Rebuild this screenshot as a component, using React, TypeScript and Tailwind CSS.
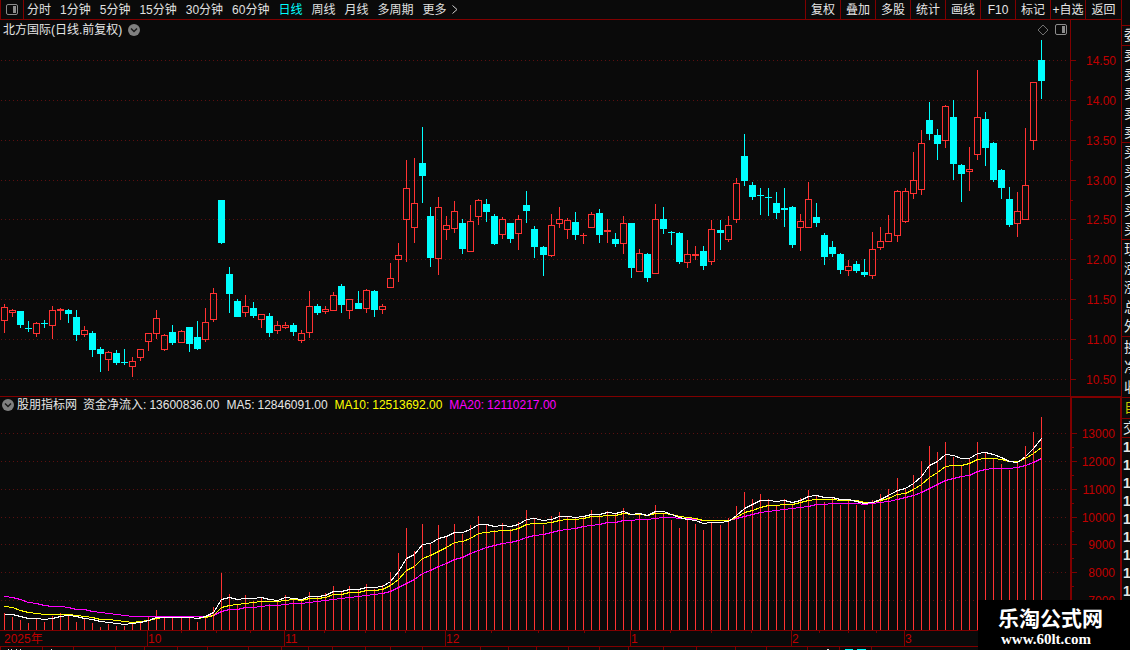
import React from 'react';

type Kind = 'up' | 'down';
type Candle = [Kind, number, number, number, number];

const PERIODS = ['分时', '1分钟', '5分钟', '15分钟', '30分钟', '60分钟', '日线', '周线', '月线', '多周期', '更多'];
const ACTIONS = ['复权', '叠加', '多股', '统计', '画线', 'F10', '标记', '+自选'];

// kind, high, body top, body bottom, low
const CANDLES: Candle[] = [
  ['up', 304, 307, 321, 333], ['up', 309, 310, 313, 317], ['down', 311, 311, 325, 328], ['down', 321, 328, 329, 332],
  ['up', 322, 323, 334, 337], ['down', 320, 323, 324, 328], ['up', 306, 310, 326, 339], ['up', 308, 309, 311, 320],
  ['down', 309, 310, 314, 323], ['down', 310, 317, 335, 341], ['up', 326, 330, 335, 337], ['down', 331, 333, 350, 357],
  ['down', 347, 349, 354, 372], ['up', 351, 352, 360, 371], ['down', 350, 353, 363, 365], ['down', 349, 362, 363, 365],
  ['up', 357, 361, 367, 377], ['up', 349, 349, 358, 361], ['up', 333, 333, 342, 351], ['up', 310, 318, 334, 339],
  ['up', 334, 335, 350, 351], ['down', 325, 332, 343, 345], ['up', 330, 331, 343, 343], ['down', 327, 327, 344, 352],
  ['down', 321, 337, 349, 350], ['up', 308, 322, 340, 342], ['up', 288, 293, 320, 322], ['down', 200, 200, 243, 244],
  ['down', 267, 274, 294, 313], ['down', 299, 301, 317, 317], ['up', 295, 306, 313, 317], ['down', 302, 308, 316, 318],
  ['up', 314, 314, 320, 328], ['down', 313, 316, 333, 337], ['up', 321, 325, 331, 334], ['up', 322, 325, 328, 329],
  ['down', 323, 325, 332, 336], ['up', 330, 333, 341, 343], ['up', 291, 306, 333, 338], ['down', 304, 306, 313, 315],
  ['up', 306, 309, 312, 314], ['up', 292, 295, 311, 311], ['down', 284, 286, 305, 313], ['up', 299, 299, 311, 319],
  ['down', 291, 303, 309, 309], ['up', 289, 290, 309, 313], ['down', 290, 291, 310, 317], ['up', 304, 306, 310, 314],
  ['up', 263, 278, 288, 288], ['up', 243, 255, 260, 282], ['up', 160, 188, 220, 262], ['up', 158, 203, 228, 243],
  ['down', 127, 163, 176, 203], ['down', 207, 216, 258, 267], ['up', 197, 207, 259, 275], ['up', 216, 225, 230, 240],
  ['up', 201, 211, 229, 233], ['down', 219, 223, 249, 254], ['up', 205, 221, 252, 252], ['up', 199, 200, 217, 225],
  ['down', 199, 204, 212, 222], ['down', 214, 216, 244, 245], ['up', 217, 219, 235, 239], ['down', 223, 223, 239, 243],
  ['up', 215, 219, 234, 250], ['down', 191, 205, 211, 223], ['down', 226, 229, 247, 258], ['down', 246, 247, 255, 276],
  ['up', 214, 225, 256, 257], ['up', 207, 219, 224, 228], ['up', 218, 220, 230, 239], ['down', 212, 222, 235, 240],
  ['up', 233, 235, 236, 244], ['up', 212, 214, 228, 228], ['down', 209, 213, 235, 243], ['up', 219, 230, 232, 243],
  ['down', 233, 239, 244, 247], ['up', 216, 223, 244, 254], ['down', 223, 223, 268, 278], ['up', 249, 253, 272, 272],
  ['down', 253, 254, 278, 282], ['up', 204, 219, 274, 274], ['down', 207, 219, 229, 234], ['down', 231, 232, 233, 245],
  ['down', 232, 233, 262, 264], ['up', 240, 254, 263, 268], ['up', 246, 254, 256, 260], ['down', 246, 251, 266, 270],
  ['up', 220, 229, 262, 265], ['down', 220, 230, 233, 250], ['up', 216, 225, 240, 242], ['up', 178, 183, 220, 223],
  ['down', 134, 156, 181, 186], ['down', 182, 185, 197, 200], ['down', 188, 195, 196, 215], ['down', 188, 197, 198, 216],
  ['down', 192, 203, 213, 219], ['down', 188, 208, 210, 227], ['down', 206, 207, 245, 248], ['up', 214, 221, 228, 251],
  ['up', 182, 199, 228, 228], ['down', 203, 217, 223, 227], ['down', 233, 235, 257, 265], ['down', 241, 247, 254, 257],
  ['down', 253, 254, 270, 274], ['up', 260, 266, 271, 276], ['down', 261, 264, 271, 273], ['down', 259, 272, 275, 277],
  ['up', 232, 249, 276, 279], ['up', 227, 241, 248, 250], ['up', 215, 233, 242, 242], ['up', 190, 191, 236, 242],
  ['up', 188, 191, 222, 223], ['up', 152, 180, 194, 199], ['up', 130, 143, 190, 195], ['down', 102, 120, 134, 140],
  ['down', 129, 135, 144, 160], ['up', 105, 106, 141, 148], ['down', 100, 117, 164, 180], ['down', 164, 165, 174, 202],
  ['up', 147, 169, 172, 191], ['up', 70, 117, 155, 160], ['down', 112, 119, 148, 166], ['down', 142, 143, 180, 182],
  ['down', 169, 170, 188, 199], ['down', 187, 199, 225, 227], ['up', 192, 211, 224, 237], ['up', 128, 185, 220, 220],
  ['up', 82, 82, 141, 150], ['down', 40, 60, 81, 99],
];

const FLOW = [
  613, 617, 620, 623, 619, 622, 616, 613, 615, 622, 619, 623, 627, 624, 626, 626, 624, 622, 617, 610,
  616, 618, 616, 617, 622, 617, 607, 573, 594, 605, 595, 601, 597, 604, 600, 595, 599, 601, 592, 596,
  593, 586, 592, 586, 590, 584, 589, 585, 572, 553, 528, 551, 524, 543, 525, 536, 524, 534, 525, 516,
  525, 530, 523, 529, 522, 510, 518, 525, 516, 512, 516, 518, 517, 510, 515, 511, 513, 508, 520, 514,
  519, 505, 513, 520, 528, 519, 524, 530, 522, 525, 518, 506, 492, 499, 494, 499, 505, 499, 505, 498,
  490, 496, 502, 498, 505, 500, 505, 510, 500, 494, 489, 478, 488, 475, 461, 446, 452, 442, 457, 465,
  459, 442, 453, 459, 464, 470, 462, 446, 432, 417,
];

const MA5 = [
  614, 614, 616, 618, 618, 619, 618, 616, 615, 616, 618, 619, 621, 622, 623, 624, 623, 622, 620, 617,
  617, 617, 617, 617, 618, 616, 612, 599, 597, 599, 598, 598, 597, 599, 600, 597, 598, 599, 596, 596,
  595, 591, 591, 589, 589, 587, 587, 586, 581, 571, 558, 554, 544, 543, 538, 536, 532, 532, 529, 524,
  524, 526, 525, 526, 524, 519, 518, 520, 519, 516, 516, 517, 516, 514, 514, 512, 513, 511, 514, 513,
  515, 511, 511, 514, 517, 519, 520, 523, 522, 522, 521, 515, 508, 504, 500, 500, 501, 500, 502, 500,
  496, 495, 497, 497, 499, 499, 501, 503, 502, 499, 495, 490, 488, 483, 476, 465, 461, 454, 455, 458,
  458, 453, 452, 454, 457, 461, 462, 456, 448, 438,
];

const MA10 = [
  606, 607, 610, 612, 613, 614, 614, 614, 614, 615, 616, 617, 619, 619, 620, 621, 622, 621, 620, 618,
  617, 617, 617, 617, 618, 617, 615, 607, 605, 604, 603, 602, 601, 601, 601, 600, 599, 600, 598, 598,
  597, 594, 594, 592, 592, 590, 590, 589, 585, 579, 570, 566, 558, 555, 551, 547, 542, 541, 538, 533,
  532, 531, 530, 530, 528, 524, 523, 523, 522, 520, 519, 519, 518, 516, 516, 515, 515, 513, 514, 514,
  515, 513, 513, 514, 516, 517, 518, 520, 520, 520, 520, 517, 512, 510, 507, 505, 505, 504, 504, 502,
  500, 499, 499, 499, 500, 500, 500, 502, 502, 500, 498, 494, 493, 489, 484, 477, 472, 466, 465, 465,
  463, 459, 458, 458, 459, 461, 461, 458, 453, 447,
];

const MA20 = [
  596, 597, 599, 602, 603, 605, 606, 606, 607, 609, 609, 611, 612, 613, 614, 615, 616, 616, 616, 616,
  616, 616, 616, 616, 616, 616, 615, 611, 609, 609, 607, 607, 606, 605, 605, 604, 603, 603, 602, 601,
  600, 599, 598, 597, 596, 595, 594, 593, 591, 587, 583, 579, 573, 570, 566, 563, 559, 557, 553, 550,
  547, 545, 543, 542, 540, 537, 535, 534, 532, 530, 529, 528, 526, 525, 524, 522, 522, 520, 520, 519,
  519, 518, 517, 517, 518, 518, 519, 520, 520, 520, 520, 518, 516, 514, 512, 511, 510, 509, 508, 507,
  506, 504, 504, 503, 503, 503, 503, 504, 503, 502, 501, 499, 497, 495, 492, 488, 484, 480, 478, 476,
  475, 471, 469, 468, 468, 468, 467, 465, 462, 458,
];

const PRICE_LEVELS: [number, string][] = [
  [60, '14.50'], [100, '14.00'], [140, '13.50'], [180, '13.00'], [219, '12.50'],
  [259, '12.00'], [299, '11.50'], [339, '11.00'], [379, '10.50'],
];

const FLOW_LEVELS: [number, string][] = [
  [433, '13000'], [461, '12000'], [489, '11000'], [517, '10000'], [544, '9000'], [572, '8000'], [600, '7000'],
];

const MONTHS: [number, string][] = [
  [147, '10'], [284, '11'], [445, '12'], [630, '1'], [791, '2'], [904, '3'],
];
const WEEK_TICKS = [181, 216, 250, 324, 365, 405, 491, 538, 584, 670, 711, 751, 819, 848, 876];
const TAB_TICKS = [
  0, 42, 73, 115, 144, 177, 207, 248, 281, 308, 332, 365, 390, 422, 480, 508, 536, 568, 599, 628, 663, 696, 735, 766,
  807, 839, 871,
];

const QUOTE_GROUPS = [
  ['卖', '卖', '卖', '卖', '卖'],
  ['买', '买', '买', '买', '买'],
  ['现', '涨', '涨', '总', '外'],
];

// bars sit 8px apart, with one spare pixel about every 22 bars
const barX = (i: number) => 4 + i * 8 + Math.floor((i + 0.6) / 22.25);

const linePoints = (values: number[]) => values.map((y, i) => `${barX(i) + 0.5},${y + 0.5}`).join(' ');

const ChevronBadge: React.FC<{ label: string }> = ({ label }) => (
  <button aria-label={label} className="shrink-0">
    <svg width="12" height="12" viewBox="0 0 12 12">
      <circle cx="6" cy="6" r="6" fill="#808080" />
      <path d="M3 4.5 L6 7.5 L9 4.5" fill="none" stroke="#1a1a1a" strokeWidth="1.5" />
    </svg>
  </button>
);

const PanelIcon: React.FC = () => (
  <svg width="13" height="12" viewBox="0 0 13 12">
    <rect x="0.5" y="0.5" width="11" height="10" rx="1.5" fill="none" stroke="#8c8c8c" />
    <rect x="7" y="2" width="3" height="7" fill="#8c8c8c" />
  </svg>
);

const GridLines: React.FC<{ levels: [number, string][] }> = ({ levels }) => (
  <>
    {levels.map(([y]) => (
      <line key={y} x1="1" x2="99.6%" y1={y + 0.5} y2={y + 0.5} stroke="#5c1010" strokeDasharray="1 3" />
    ))}
  </>
);

const Scale: React.FC<{ levels: [number, string][]; top: number; half: number; right: number }> = ({
  levels,
  top,
  half,
  right,
}) => (
  <svg className="block w-full h-full text-[12px]">
    <g transform={`translate(0 ${-top})`}>
      {levels.map(([y, label]) => (
        <g key={label}>
          <rect x="0" y={y} width="5" height="1" fill="#800000" />
          <rect x="0" y={y + half} width="2" height="1" fill="#800000" />
          <text x={right} y={y + 5} textAnchor="end" fill="#c00000">
            {label}
          </text>
        </g>
      ))}
    </g>
  </svg>
);

const Candles: React.FC = () => (
  <>
    {CANDLES.map(([kind, high, top, bottom, low], i) => {
      const x = barX(i);
      if (kind === 'down') {
        return (
          <g key={i} fill="#00ffff">
            <rect x={x} y={high} width="1" height={low - high} />
            <rect x={x - 3} y={top} width="7" height={bottom - top} />
          </g>
        );
      }
      return (
        <g key={i} fill="#ff3232">
          <rect x={x} y={high} width="1" height={top - high} />
          <rect x={x} y={bottom} width="1" height={low - bottom} />
          {bottom - top < 3 ? (
            <rect x={x - 3} y={top} width="7" height={bottom - top} />
          ) : (
            <rect x={x - 2.5} y={top + 0.5} width="6" height={bottom - top - 1} fill="none" stroke="#ff3232" />
          )}
        </g>
      );
    })}
  </>
);

const Toolbar: React.FC = () => (
  <header className="flex h-5 border-b border-[#800000]">
    <button aria-label="侧栏" className="flex w-6 items-center justify-center border-x border-[#800000]">
      <PanelIcon />
    </button>
    <nav className="flex flex-1 items-center gap-[9px] pl-[3px]">
      {PERIODS.map((period) => (
        <button key={period} className={period === '日线' ? 'text-[#00ffff]' : 'text-[#e0e0e0]'}>
          {period}
        </button>
      ))}
      <svg width="6" height="9" viewBox="0 0 6 9" className="-ml-1">
        <path d="M0.5 0.5 L5 4.5 L0.5 8.5" fill="none" stroke="#d0d0d0" />
      </svg>
    </nav>
    <div className="flex">
      {ACTIONS.map((action) => (
        <button key={action} className="w-[35px] border-l border-[#800000] whitespace-nowrap">
          {action}
        </button>
      ))}
      <button className="w-[36px] border-l border-[#800000]">返回</button>
    </div>
  </header>
);

const PricePanel: React.FC = () => (
  <section className="flex h-[376px]">
    <div className="flex min-w-0 flex-1 flex-col">
      <div className="flex h-5 items-center gap-[6px] pl-[3px] pr-[2px]">
        <h1>北方国际(日线.前复权)</h1>
        <ChevronBadge label="展开" />
        <svg width="12" height="12" viewBox="0 0 12 12" className="ml-auto">
          <path d="M6 1 L11 6 L6 11 L1 6 Z" fill="none" stroke="#707070" />
        </svg>
        <PanelIcon />
      </div>
      <svg className="block w-full flex-1" shapeRendering="crispEdges">
        <g transform="translate(0 -40)">
          <GridLines levels={PRICE_LEVELS} />
          <Candles />
        </g>
      </svg>
    </div>
    <div className="w-[51px] border-l border-[#800000]">
      <Scale levels={PRICE_LEVELS} top={20} half={20} right={45} />
    </div>
  </section>
);

const Reading: React.FC<{ name: string; value: string }> = ({ name, value }) => (
  <span className="flex gap-[3px]">
    <span>{name}:</span>
    <span>{value}</span>
  </span>
);

const FlowPanel: React.FC = () => (
  <section className="flex h-[234px] border-t border-[#800000]">
    <div className="flex min-w-0 flex-1 flex-col">
      <div className="flex h-4 items-center gap-[3px] whitespace-nowrap pl-[2px]">
        <ChevronBadge label="指标" />
        <h2 className="pr-[3px]">股朋指标网</h2>
        <div className="flex gap-[7px]">
          <Reading name="资金净流入" value="13600836.00" />
          <Reading name="MA5" value="12846091.00" />
          <div className="text-[#ffff00]">
            <Reading name="MA10" value="12513692.00" />
          </div>
          <div className="text-[#ff00ff]">
            <Reading name="MA20" value="12110217.00" />
          </div>
        </div>
      </div>
      <svg className="block w-full flex-1" shapeRendering="crispEdges">
        <g transform="translate(0 -413)">
          <GridLines levels={FLOW_LEVELS} />
          {FLOW.map((y, i) => (
            <rect key={i} x={barX(i)} y={y} width="1" height={630 - y} fill="#ff3232" />
          ))}
          <polyline points={linePoints(MA20)} fill="none" stroke="#ff00ff" />
          <polyline points={linePoints(MA10)} fill="none" stroke="#ffff00" />
          <polyline points={linePoints(MA5)} fill="none" stroke="#ffffff" />
        </g>
      </svg>
    </div>
    <div className="w-[51px] border-l-2 border-r border-t border-[#800000]">
      <Scale levels={FLOW_LEVELS} top={398} half={14} right={43} />
    </div>
  </section>
);

const TimeAxis: React.FC = () => (
  <footer className="border-t border-[#800000]">
    <svg className="block h-[15px] w-full text-[12px]" fill="#c00000">
      <text x="4" y="12">2025年</text>
      {MONTHS.map(([x, label]) => (
        <g key={x}>
          <rect x={x} y="0" width="1" height="15" fill="#800000" />
          <text x={x + 1} y="12">{label}</text>
        </g>
      ))}
      {WEEK_TICKS.map((x) => (
        <rect key={x} x={x} y="0" width="1" height="2" fill="#800000" />
      ))}
    </svg>
    <svg className="block h-1 w-full border-t border-[#800000]">
      {TAB_TICKS.map((x) => (
        <rect key={x} x={x} y="0" width="1" height="3" fill="#800000" />
      ))}
      <path d="M8 2.5h1m2 0h1m4 0h1m3 0h1m30 0h1m775 0h2" stroke="#e0e0e0" />
      <path d="M845 2.5h8m4 0h9" stroke="#00ffff" />
    </svg>
  </footer>
);

const QuoteStrip: React.FC = () => (
  <aside className="w-[9px] shrink-0 overflow-hidden border-l border-[#800000] text-[14px] leading-[19px]">
    <div className="h-[26px] border-b border-[#800000]" />
    <div className="h-5 w-6 border-b border-[#800000] pl-[2px]">委</div>
    {QUOTE_GROUPS.map((rows, g) => (
      <div key={g} className="flex h-[97px] w-6 flex-col justify-around border-b border-[#800000] pl-[2px]">
        {rows.map((row, i) => (
          <span key={i}>{row}</span>
        ))}
      </div>
    ))}
    <div className="flex h-[61px] w-6 flex-col justify-around border-b border-[#800000] pl-[2px]">
      <span>换</span>
      <span>净</span>
      <span>收</span>
    </div>
    <div className="h-[21px] w-6 border-b border-[#800000] pl-[2px] text-[#c8c800]">自</div>
    <div className="h-[19px] w-6 border-b border-[#800000] pl-px">交</div>
    <div className="flex flex-col pl-px font-bold leading-[18px]">
      {[1, 2, 3, 4, 5, 6, 7, 8, 9].map((n) => (
        <span key={n}>1</span>
      ))}
    </div>
  </aside>
);

const App: React.FC = () => {
  return (
    <div className="relative flex min-h-screen overflow-hidden bg-[#0a0a0a] font-['Liberation_Sans','Noto_Sans_CJK_SC',sans-serif] text-[12px] leading-4 text-[#e6e6e6]">
      <main className="min-w-0 flex-1">
        <Toolbar />
        <PricePanel />
        <FlowPanel />
        <TimeAxis />
      </main>
      <QuoteStrip />

      {/* Site badge */}
      <div className="absolute bottom-0 right-0 flex h-[50px] w-[152px] flex-col bg-black pl-5 pt-[8px] text-white">
        <span className="text-[21px] font-bold leading-[22px]">乐淘公式网</span>
        <a
          href="#"
          className="pl-[3px] font-['Liberation_Serif',serif] text-[15px] font-bold leading-[18px]"
        >
          www.60lt.com
        </a>
      </div>
    </div>
  );
};

export default App;
